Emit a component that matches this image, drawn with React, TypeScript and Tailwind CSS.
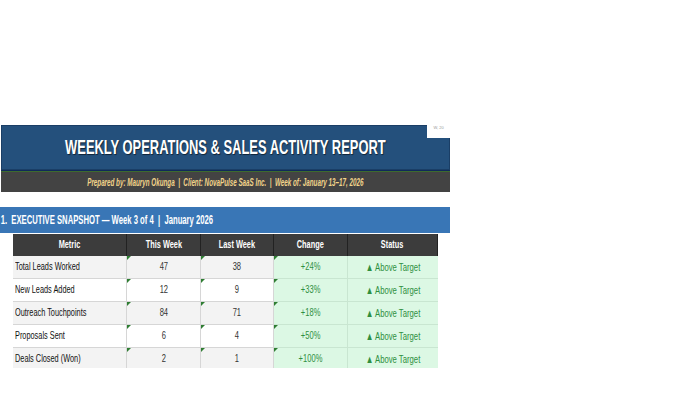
import React from "react";

const rows = [
  { metric: "Total Leads Worked", now: "47", last: "38", change: "+24%" },
  { metric: "New Leads Added", now: "12", last: "9", change: "+33%" },
  { metric: "Outreach Touchpoints", now: "84", last: "71", change: "+18%" },
  { metric: "Proposals Sent", now: "6", last: "4", change: "+50%" },
  { metric: "Deals Closed (Won)", now: "2", last: "1", change: "+100%" },
];

// spreadsheet "comment" marker in the top-left corner of a cell
function Marker() {
  return (
    <span className="absolute left-0 top-0 h-0 w-0 border-r-[4px] border-t-[4px] border-r-transparent border-t-[#2e7d32]" />
  );
}

export default function App() {
  return (
    <div className="h-[394px] w-[700px] overflow-hidden bg-white font-['Liberation_Sans',Arial,sans-serif]">
      <div className="h-[125px]" />

      {/* Title banner */}
      <div className="relative ml-px w-[449px]">
        <div className="flex h-[45px] items-center justify-center border border-[#1a3e66] bg-[#24507c]">
          <span className="inline-block origin-center scale-x-[0.63] whitespace-nowrap text-[20.5px] font-bold text-white [text-shadow:1px_1px_1px_rgba(0,0,0,0.55)]">
            WEEKLY OPERATIONS &amp; SALES ACTIVITY REPORT
          </span>
        </div>
        <div className="absolute right-0 top-0 flex h-[13px] w-[23px] items-start justify-center bg-white">
          <span className="text-[4px] leading-[6px] text-[#9a9a9a]">W, 20</span>
        </div>
        <div className="h-px bg-[#10295a]" />
        <div className="h-px bg-[#3d6b2e]" />
        <div className="flex h-[20px] items-center justify-center bg-[#434343]">
          <span className="inline-block origin-center scale-x-[0.57] whitespace-nowrap text-[11px] font-bold italic text-[#f2d48a]">
            Prepared by: Mauryn Okunga &nbsp;|&nbsp; Client: NovaPulse SaaS Inc. &nbsp;|&nbsp; Week of: January 13–17, 2026
          </span>
        </div>
      </div>

      <div className="h-[15px]" />

      {/* Section header */}
      <div className="flex h-[26px] w-[450px] items-center bg-[#3976b6]">
        <span className="inline-block origin-left scale-x-[0.64] whitespace-nowrap pl-px text-[12px] font-bold text-white">
          1.&nbsp; EXECUTIVE SNAPSHOT — Week 3 of 4 &nbsp;|&nbsp; January 2026
        </span>
      </div>

      {/* Snapshot table */}
      <div className="ml-[13px] mt-px h-[134px] w-[425px] overflow-hidden">
        <div className="grid grid-cols-[114px_74px_73px_74px_90px]">
          {["Metric", "This Week", "Last Week", "Change", "Status"].map((h) => (
            <div
              key={h}
              className="flex h-[22px] items-center justify-center border-r border-[#222] bg-[#3c3c3c] last:border-r-0"
            >
              <span className="inline-block scale-x-[0.7] whitespace-nowrap text-[10.5px] font-bold text-white">{h}</span>
            </div>
          ))}

          {rows.map((r, i) => {
            const bg = i % 2 === 0 ? "bg-[#f3f3f3]" : "bg-white";
            return (
              <React.Fragment key={r.metric}>
                <div className={`flex h-[23px] items-center border-b border-r border-[#d6d6d6] pl-[2px] ${bg}`}>
                  <span className="inline-block origin-left scale-x-[0.7] whitespace-nowrap text-[10.5px] text-[#111]">
                    {r.metric}
                  </span>
                </div>
                <div className={`relative flex h-[23px] items-center justify-center border-b border-r border-[#d6d6d6] ${bg}`}>
                  <Marker />
                  <span className="inline-block scale-x-[0.72] text-[10.5px] text-[#333]">{r.now}</span>
                </div>
                <div className={`relative flex h-[23px] items-center justify-center border-b border-r border-[#d6d6d6] ${bg}`}>
                  <Marker />
                  <span className="inline-block scale-x-[0.72] text-[10.5px] text-[#333]">{r.last}</span>
                </div>
                <div className="relative flex h-[23px] items-center justify-center border-b border-r border-[#c9e6d1] bg-[#dcf8e4]">
                  <Marker />
                  <span className="inline-block scale-x-[0.72] text-[10.5px] text-[#2f8f3f]">{r.change}</span>
                </div>
                <div className="flex h-[23px] items-center justify-center border-b border-[#c9e6d1] bg-[#dcf8e4]">
                  <span className="inline-block scale-x-[0.7] whitespace-nowrap text-[11px] text-[#2f8f3f]">▲ Above Target</span>
                </div>
              </React.Fragment>
            );
          })}
        </div>
      </div>
    </div>
  );
}
